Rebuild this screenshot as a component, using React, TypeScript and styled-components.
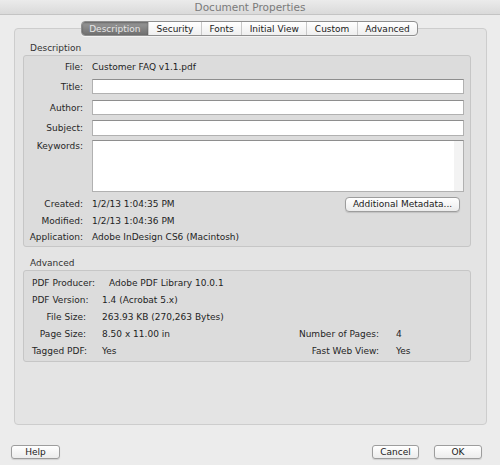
import React from "react";
import styled, { createGlobalStyle } from "styled-components";

const GlobalStyle = createGlobalStyle`
  html, body { margin: 0; padding: 0; background: #ececec; }
  body { font-family: "DejaVu Sans", "Liberation Sans", sans-serif; -webkit-font-smoothing: antialiased; }
  * { box-sizing: border-box; }
`;

const Window = styled.div`
  width: 500px;
  height: 465px;
  background: #ececec;
  display: flex;
  flex-direction: column;
  overflow: hidden;
  color: #1e1e1e;
  font-size: 9px;
`;

const TitleBar = styled.div`
  height: 15px;
  flex: none;
  display: flex;
  align-items: center;
  justify-content: center;
  background: linear-gradient(#ebebeb, #dadada);
  border-bottom: 1px solid #c4c4c4;
  color: #7a7a7a;
  font-size: 10.5px;
`;

const Content = styled.div`
  flex: 1;
  display: flex;
  flex-direction: column;
  padding: 6px 13px 0 14px;
  min-height: 0;
`;

const TabStrip = styled.div`
  align-self: center;
  display: flex;
  height: 15px;
  margin-bottom: -8px;
  margin-left: -2px;
  position: relative;
  z-index: 1;
  border: 1px solid #8f8f8f;
  border-radius: 4px;
  background: linear-gradient(#ffffff, #efefef);
  box-shadow: 0 1px 0 rgba(255, 255, 255, 0.6);
  overflow: hidden;
`;

const Tab = styled.div<{ $active?: boolean }>`
  display: flex;
  align-items: center;
  justify-content: center;
  padding: 0 7.5px;
  font-size: 9px;
  color: ${(p) => (p.$active ? "#e6e6e6" : "#1a1a1a")};
  background: ${(p) =>
    p.$active ? "linear-gradient(#9a9a9a, #6f6f6f)" : "transparent"};
  box-shadow: ${(p) => (p.$active ? "inset 0 1px 2px rgba(0,0,0,0.35)" : "none")};
  & + & {
    border-left: 1px solid #c9c9c9;
  }
`;

const Panel = styled.div`
  flex: 1;
  display: flex;
  flex-direction: column;
  background: #e4e4e4;
  border: 1px solid #cdcdcd;
  border-radius: 4px;
  padding: 13px 15px 0 8px;
`;

const SectionLabel = styled.div<{ $mt?: number }>`
  height: 12px;
  line-height: 12px;
  padding-left: 7px;
  margin-top: ${(p) => p.$mt ?? 0}px;
  margin-bottom: 1px;
  color: #333;
  font-size: 9px;
`;

const GroupBox = styled.div<{ $h: number }>`
  height: ${(p) => p.$h}px;
  background: #dcdcdc;
  border: 1px solid #c6c6c6;
  border-radius: 3px;
  display: flex;
  flex-direction: column;
`;

const DescBody = styled.div`
  padding: 2px 6px 0 0;
  display: flex;
  flex-direction: column;
`;

const FieldRow = styled.div<{ $h: number; $mt?: number; $top?: boolean }>`
  display: grid;
  grid-template-columns: 59px 1fr;
  column-gap: 9px;
  height: ${(p) => p.$h}px;
  margin-top: ${(p) => p.$mt ?? 0}px;
  align-items: ${(p) => (p.$top ? "start" : "center")};
`;

const Label = styled.div<{ $pt?: number }>`
  text-align: right;
  white-space: nowrap;
  padding-top: ${(p) => p.$pt ?? 0}px;
  color: #262626;
`;

const Value = styled.div`
  display: flex;
  align-items: center;
  white-space: nowrap;
  color: #1e1e1e;
`;

const TextInput = styled.div`
  height: 100%;
  background: #fff;
  border: 1px solid #b1b1b1;
  border-top-color: #8e8e8e;
`;

const TextArea = styled.div`
  height: 100%;
  background: linear-gradient(to right, #fff calc(100% - 9px), #f3f3f3 calc(100% - 9px));
  border: 1px solid #b1b1b1;
  border-top-color: #8e8e8e;
`;

const PushButton = styled.button<{ $w: number }>`
  width: ${(p) => p.$w}px;
  height: 15px;
  padding: 0;
  font-family: inherit;
  font-size: 9px;
  color: #1a1a1a;
  background: linear-gradient(#ffffff, #ececec);
  border: 1px solid #9d9d9d;
  border-radius: 4px;
  box-shadow: 0 1px 1px rgba(0, 0, 0, 0.12);
  display: flex;
  align-items: center;
  justify-content: center;
`;

const CreatedValue = styled(Value)`
  justify-content: space-between;
  padding-right: 4px;
`;

const AdvBody = styled.div`
  padding: 3px 0 0 8px;
  display: flex;
  flex-direction: column;
`;

const AdvRow = styled.div`
  display: flex;
  align-items: center;
  height: 17px;
  white-space: nowrap;
`;

const AdvLabel = styled.div<{ $w: number }>`
  width: ${(p) => p.$w}px;
  flex: none;
  text-align: right;
  color: #262626;
`;

const AdvValue = styled.div<{ $gap: number }>`
  flex: 1;
  padding-left: ${(p) => p.$gap}px;
`;

const RightLabel = styled.div`
  text-align: right;
  padding-right: 17px;
  color: #262626;
`;

const RightValue = styled.div`
  width: 74px;
  flex: none;
`;

const Footer = styled.div`
  flex: none;
  display: flex;
  align-items: center;
  padding: 20px 18px 6px 11px;
  gap: 15px;
`;

const FooterButton = styled(PushButton)`
  height: 14px;
  border-radius: 3px;
  &:first-child {
    margin-right: auto;
  }
`;

const advRows = [
  { label: "PDF Producer:", w: 60, gap: 17, value: "Adobe PDF Library 10.0.1" },
  { label: "PDF Version:", w: 54, gap: 16, value: "1.4 (Acrobat 5.x)" },
  { label: "File Size:", w: 54, gap: 16, value: "263.93 KB (270,263 Bytes)" },
  {
    label: "Page Size:",
    w: 54,
    gap: 16,
    value: "8.50 x 11.00 in",
    rLabel: "Number of Pages:",
    rValue: "4",
  },
  {
    label: "Tagged PDF:",
    w: 54,
    gap: 16,
    value: "Yes",
    rLabel: "Fast Web View:",
    rValue: "Yes",
  },
];

const tabs = ["Description", "Security", "Fonts", "Initial View", "Custom", "Advanced"];

export default function App() {
  return (
    <>
      <GlobalStyle />
      <Window>
        <TitleBar>Document Properties</TitleBar>
        <Content>
          <TabStrip>
            {tabs.map((t, i) => (
              <Tab key={t} $active={i === 0}>
                {t}
              </Tab>
            ))}
          </TabStrip>
          <Panel>
            <SectionLabel>Description</SectionLabel>
            <GroupBox $h={192}>
              <DescBody>
                <FieldRow $h={18}>
                  <Label>File:</Label>
                  <Value>Customer FAQ v1.1.pdf</Value>
                </FieldRow>
                <FieldRow $h={15} $mt={3}>
                  <Label>Title:</Label>
                  <TextInput />
                </FieldRow>
                <FieldRow $h={15} $mt={6}>
                  <Label>Author:</Label>
                  <TextInput />
                </FieldRow>
                <FieldRow $h={16} $mt={5}>
                  <Label>Subject:</Label>
                  <TextInput />
                </FieldRow>
                <FieldRow $h={52} $mt={4} $top>
                  <Label $pt={1}>Keywords:</Label>
                  <TextArea />
                </FieldRow>
                <FieldRow $h={16} $mt={4}>
                  <Label>Created:</Label>
                  <CreatedValue>
                    1/2/13 1:04:35 PM
                    <PushButton $w={115}>Additional Metadata...</PushButton>
                  </CreatedValue>
                </FieldRow>
                <FieldRow $h={16} $mt={1}>
                  <Label>Modified:</Label>
                  <Value>1/2/13 1:04:36 PM</Value>
                </FieldRow>
                <FieldRow $h={16}>
                  <Label>Application:</Label>
                  <Value>Adobe InDesign CS6 (Macintosh)</Value>
                </FieldRow>
              </DescBody>
            </GroupBox>
            <SectionLabel $mt={10}>Advanced</SectionLabel>
            <GroupBox $h={92}>
              <AdvBody>
                {advRows.map((r) => (
                  <AdvRow key={r.label}>
                    <AdvLabel $w={r.w}>{r.label}</AdvLabel>
                    <AdvValue $gap={r.gap}>{r.value}</AdvValue>
                    {r.rLabel && (
                      <>
                        <RightLabel>{r.rLabel}</RightLabel>
                        <RightValue>{r.rValue}</RightValue>
                      </>
                    )}
                  </AdvRow>
                ))}
              </AdvBody>
            </GroupBox>
          </Panel>
        </Content>
        <Footer>
          <FooterButton $w={49}>Help</FooterButton>
          <FooterButton $w={47}>Cancel</FooterButton>
          <FooterButton $w={48}>OK</FooterButton>
        </Footer>
      </Window>
    </>
  );
}
